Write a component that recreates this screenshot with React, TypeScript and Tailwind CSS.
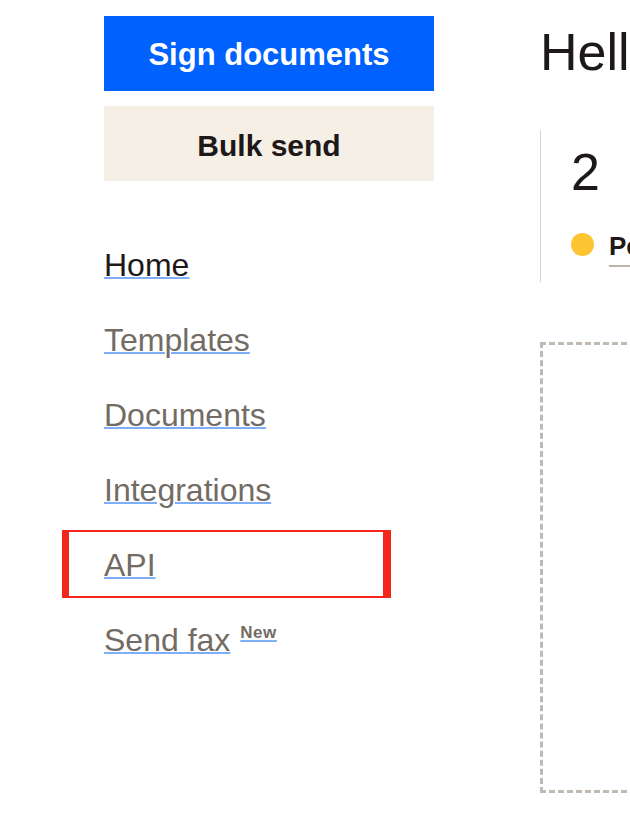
import React from 'react';

const navItems = [
  { label: 'Home', active: true },
  { label: 'Templates' },
  { label: 'Documents' },
  { label: 'Integrations' },
  { label: 'API', highlighted: true },
  { label: 'Send fax', badge: 'New' },
];

function NavLink({ label, active, highlighted, badge }: { label: string; active?: boolean; highlighted?: boolean; badge?: string }) {
  return (
    <li className="relative h-[75px] leading-[75px] text-[32px]">
      {/* annotation box around the API link */}
      {highlighted && (
        <span className="pointer-events-none absolute -left-[42px] top-[2px] bottom-[5px] w-[329px] border-y-2 border-l-[7px] border-r-[8px] border-[#F2261B]" />
      )}
      <a
        href="#"
        className={`underline decoration-2 decoration-[#7EAEF8] underline-offset-[1px] ${active ? 'text-[#1E1919]' : 'text-[#736C64]'}`}
      >
        {label}
      </a>
      {badge && (
        <sup className="relative -top-[13px] ml-[10px] align-baseline text-[17px] font-bold tracking-[0.5px]">
          <a href="#" className="text-[#736C64] underline decoration-2 decoration-[#7EAEF8] underline-offset-[2px]">
            {badge}
          </a>
        </sup>
      )}
    </li>
  );
}

export default function App() {
  return (
    <div className="h-[835px] w-[630px] overflow-hidden bg-white font-['Liberation_Sans',Arial,sans-serif]">
      <div className="flex pl-[104px] pt-[16px]">
        {/* Sidebar */}
        <aside className="w-[330px] shrink-0">
          <button className="flex h-[75px] w-full items-center justify-center bg-[#0061FE] pt-[3px] text-[31px] font-bold text-white">
            Sign documents
          </button>
          <button className="mt-[15px] flex h-[75px] w-full items-center justify-center bg-[#F5EFE5] pt-[3px] text-[30px] font-bold text-[#1E1919]">
            Bulk send
          </button>
          <ul className="mt-[47px]">
            {navItems.map((item) => (
              <NavLink key={item.label} {...item} />
            ))}
          </ul>
        </aside>

        {/* Main */}
        <main className="ml-[106px] w-[700px] shrink-0">
          <h1 className="mt-[10px] whitespace-nowrap text-[52px] leading-[52px] text-[#1E1919]">Hello, Alex</h1>

          <div className="mt-[52px] h-[152px] border-l border-[#D9D4CE] pl-[30px] pt-[16px]">
            <div className="text-[52px] leading-[52px] text-[#1E1919]">2</div>
            <div className="mt-[35px] flex items-start gap-[15px]">
              <span className="h-[23px] w-[23px] shrink-0 rounded-full bg-[#FFC431]" />
              <span className="whitespace-nowrap border-b-2 border-[#BBB5AE] pb-[6px] text-[26px] font-bold leading-[26px] text-[#1E1919]">
                Pending signatures
              </span>
            </div>
          </div>

          <div className="mt-[60px] h-[451px] w-[600px] border-[3px] border-dashed border-[#C1BAB2]" />
        </main>
      </div>
    </div>
  );
}
